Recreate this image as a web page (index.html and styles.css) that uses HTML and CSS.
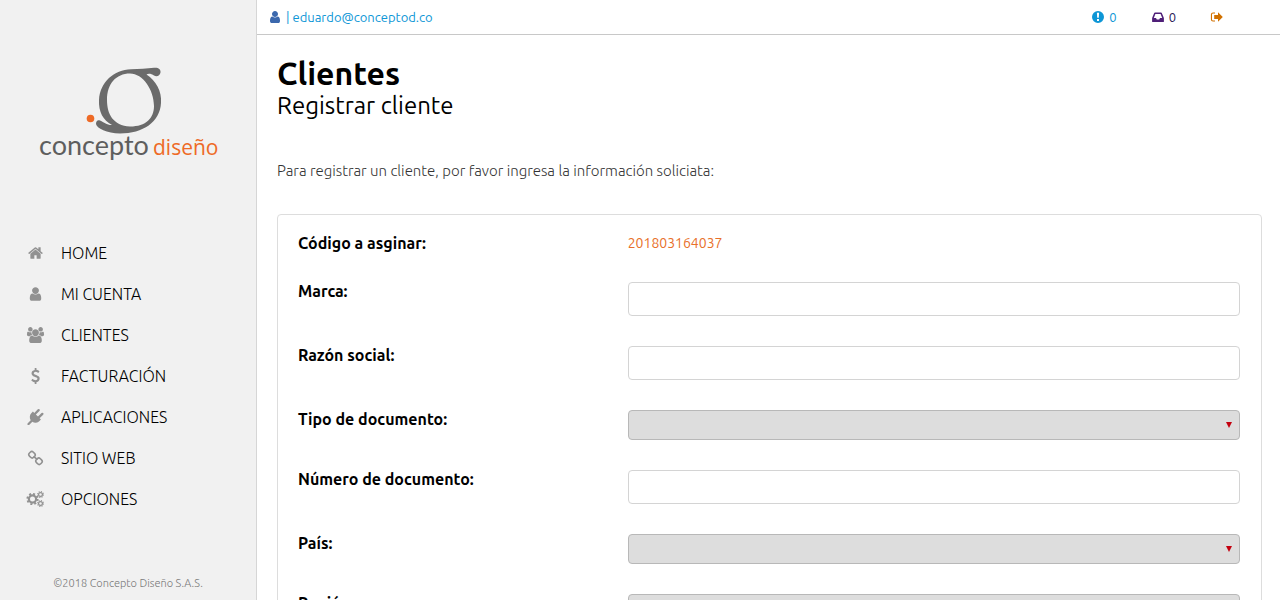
FILE: index.html
```
<!DOCTYPE html>
<html lang="es">
    <head>
        <meta charset="utf-8">
        <meta name="viewport" content="width=device-width, initial-scale=1">
        <title>Clientes - Registrar cliente</title>
        <link rel="stylesheet" href="styles.css">
    </head>
    <body>

        <aside class="sidebar">
            <a class="logo" href="#" aria-label="Concepto Diseño">
                <svg width="190" height="102" viewBox="5 0 190 102">
                    <path class="logo-mark" fill-rule="evenodd" d="M126 1.800C130 1.300 133 3 132.500 6.500C132 10 128.500 11 126 9.500C123.500 7.500 120 7 118.500 8.500C128 15 134 25 133 37C132 56 115 67.500 92 67.500C79 67.500 68.500 62 68 58C68 54.500 70 53.500 72 54.500C75 56 80 59.500 84 59C75 54 70.500 46 71 34C72 16 86 4 103 3.300C111 3 119 2.500 126 1.800ZM102 7.500C88 7.500 79 18 79 34C79 48 85 59.500 102 60.500C118 60.500 126 52 126 40C126 24 115 7.500 102 7.500Z"/>
                    <circle class="logo-dot" cx="62.500" cy="52.500" r="3.800"/>
                    <text class="logo-concepto" x="11" y="89">concepto</text>
                    <text class="logo-diseno" x="125" y="89">diseño</text>
                </svg>
            </a>

            <nav class="menu">
                <a href="#">
                    <svg viewBox="0 0 1792 1792"><path d="M1472 992v480q0 26-19 45t-45 19h-384v-384h-256v384h-384q-26 0-45-19t-19-45v-480q0-1 .5-3t.5-3l575-474 575 474q1 2 1 6zm223-69l-62 74q-8 9-21 11h-3q-13 0-21-7l-692-577-692 577q-12 8-24 7-13-2-21-11l-62-74q-8-10-7-23.500t11-21.500l719-599q32-26 76-26t76 26l244 204v-195q0-14 9-23t23-9h192q14 0 23 9t9 23v408l219 182q10 8 11 21.500t-7 23.500z"/></svg>
                    <span>HOME</span>
                </a>
                <a href="#">
                    <svg viewBox="0 0 1792 1792"><path d="M1536 1399q0 109-62.500 187t-150.500 78h-854q-88 0-150.500-78t-62.500-187q0-85 8.500-160.500t31.500-152 58.500-131 94-89 134.500-34.500q131 128 313 128t313-128q76 0 134.500 34.500t94 89 58.500 131 31.500 152 8.500 160.500zm-256-887q0 159-112.500 271.500t-271.500 112.500-271.500-112.500-112.500-271.500 112.500-271.500 271.500-112.500 271.500 112.500 112.500 271.500z"/></svg>
                    <span>MI CUENTA</span>
                </a>
                <a href="#">
                    <svg viewBox="0 0 1920 1792"><path d="M593 896q-162 5-265 128h-134q-82 0-138-40.500t-56-118.500q0-353 124-353 6 0 43.500 21t97.500 42.500 119 21.500q67 0 133-23-5 37-5 66 0 159 81 256zm1071 637q0 120-73 189.500t-194 69.500h-874q-121 0-194-69.500t-73-189.500q0-53 3.500-103.500t14-109 26.500-108.500 43-97.500 62-81 85.500-53.500 111.500-20q10 0 43 21.500t73 48 107 48 135 21.500 135-21.500 107-48 73-48 43-21.500q61 0 111.500 20t85.500 53.500 62 81 43 97.500 26.500 108.500 14 109 3.500 103.500zm-1024-1277q0 106-75 181t-181 75-181-75-75-181 75-181 181-75 181 75 75 181zm704 384q0 159-112.500 271.500t-271.500 112.500-271.500-112.500-112.500-271.500 112.500-271.500 271.500-112.500 271.500 112.500 112.500 271.500zm576 225q0 78-56 118.500t-138 40.500h-134q-103-123-265-128 93-97 93-256 0-29-5-66 66 23 133 23 59 0 119-21.500t97.500-42.500 31.500-21q124 0 124 353zm-128-609q0 106-75 181t-181 75-181-75-75-181 75-181 181-75 181 75 75 181z"/></svg>
                    <span>CLIENTES</span>
                </a>
                <a href="#">
                    <svg viewBox="0 0 1792 1792"><path d="M1362 1185q0 153-99.500 263.500t-258.500 136.500v175q0 14-9 23t-23 9h-135q-13 0-22.500-9.500t-9.500-22.500v-175q-66-9-127.500-31t-101.500-44.500-74-48-46.500-37.500-17.500-18q-17-21-2-41l103-135q7-10 23-12 15-2 24 9l2 2q113 99 243 125 37 8 74 8 81 0 142.500-43t61.500-122q0-28-15-53t-33.500-42-58.500-37.500-66-32-80-32.500q-39-16-61.500-25t-61.500-26.500-62.500-31-56.500-35.500-53.500-42.500-43.500-49-35.500-58-21-66.500-8.500-78q0-138 98-242t255-134v-180q0-13 9.500-22.500t22.500-9.500h135q14 0 23 9t9 23v176q57 6 110.500 23t87 33.500 63.500 37.500 39 29 15 14q17 18 5 38l-81 146q-8 15-23 16-14 3-27-7-3-3-14.500-12t-39-26.500-58.500-32-74.500-26-85.500-11.500q-95 0-155 43t-60 111q0 26 8.500 48t29.500 41.500 39.500 33 56 31 60.500 27 70 27.500q53 20 81 31.500t76 35 75.500 42.500 62 50 53 63.500 31.500 76.500 13 94z"/></svg>
                    <span>FACTURACIÓN</span>
                </a>
                <a href="#">
                    <svg viewBox="0 0 1792 1792"><path d="M1755 453q37 38 37 90.500t-37 90.500l-401 400 150 150-160 160q-163 163-389.500 186.500t-411.500-100.500l-362 362h-181v-181l362-362q-124-185-100.500-411.500t186.500-389.500l160-160 150 150 400-401q38-37 91-37t90 37 37 90.500-37 90.500l-400 401 234 234 401-400q38-37 91-37t90 37z"/></svg>
                    <span>APLICACIONES</span>
                </a>
                <a href="#">
                    <svg class="line" viewBox="0 0 16 16">
                        <rect x="1.500" y="2" width="6" height="5.500" rx="2.200" transform="rotate(45 4.500 4.750)"/>
                        <rect x="8.500" y="8.500" width="6" height="5.500" rx="2.200" transform="rotate(45 11.500 11.250)"/>
                        <path d="M6 6.300L10 9.700"/>
                    </svg>
                    <span>SITIO WEB</span>
                </a>
                <a href="#">
                    <svg class="line" viewBox="0 0 18 16">
                        <circle cx="6" cy="8" r="3.600" stroke-width="2.200"/>
                        <circle cx="6" cy="8" r="5.200" stroke-width="1.800" stroke-dasharray="2.040 2.040"/>
                        <circle cx="14" cy="3.500" r="1.900" stroke-width="1.200"/>
                        <circle cx="14" cy="3.500" r="2.900" stroke-width="1.100" stroke-dasharray="1.140 1.140"/>
                        <circle cx="14" cy="12.500" r="1.900" stroke-width="1.200"/>
                        <circle cx="14" cy="12.500" r="2.900" stroke-width="1.100" stroke-dasharray="1.140 1.140"/>
                    </svg>
                    <span>OPCIONES</span>
                </a>
            </nav>

            <p class="copyright">©2018 Concepto Diseño S.A.S.</p>
        </aside>

        <div class="page">
            <header class="topbar">
                <a class="account" href="#">
                    <svg class="user-icon" viewBox="0 0 1792 1792"><path d="M1536 1399q0 109-62.500 187t-150.500 78h-854q-88 0-150.500-78t-62.500-187q0-85 8.500-160.500t31.500-152 58.500-131 94-89 134.500-34.500q131 128 313 128t313-128q76 0 134.500 34.500t94 89 58.500 131 31.500 152 8.500 160.500zm-256-887q0 159-112.500 271.500t-271.500 112.500-271.500-112.500-112.500-271.500 112.500-271.500 271.500-112.500 271.500 112.500 112.500 271.500z"/></svg>
                    <span>| eduardo@conceptod.co</span>
                </a>
                <div class="actions">
                    <a class="alerts" href="#" aria-label="Alertas">
                        <svg viewBox="0 0 14 14"><path fill-rule="evenodd" d="M7 1a6 6 0 1 1 0 12a6 6 0 1 1 0-12zM5.900 2.800l.3 5h1.600l.3-5zM6 9v2h2v-2z"/></svg>
                        <span>0</span>
                    </a>
                    <a class="messages" href="#" aria-label="Mensajes">
                        <svg viewBox="0 0 14 14"><path fill-rule="evenodd" d="M4 2.500h6q.6 0 .8.600l1.900 4.400q.2.500.2 1v3q0 .6-.6.600h-10.600q-.6 0-.6-.6v-3q0-.5.200-1l1.900-4.400q.2-.6.800-.6zM4.400 4L2.800 7.900h2.200l.8 1.500h2.400l.8-1.500h2.200L9.600 4z"/></svg>
                        <span>0</span>
                    </a>
                    <a class="logout" href="#" aria-label="Salir">
                        <svg viewBox="0 0 14 14"><path d="M5 2.500v1.100h-2q-1 0-1 1v4.800q0 1 1 1h2v1.100h-2q-2.100 0-2.100-2.100v-4.800q0-2.100 2.100-2.100zM8 2.200L12.800 7L8 11.800v-2.800h-3.800v-4h3.800z"/></svg>
                    </a>
                </div>
            </header>

            <main class="content">
                <h1>Clientes</h1>
                <h2>Registrar cliente</h2>
                <p class="intro">Para registrar un cliente, por favor ingresa la información soliciata:</p>

                <form class="client-form">
                    <div class="row">
                        <label for="codigo">Código a asginar:</label>
                        <output class="code" id="codigo">201803164037</output>
                    </div>
                    <div class="row">
                        <label for="marca">Marca:</label>
                        <input type="text" id="marca" name="marca">
                    </div>
                    <div class="row">
                        <label for="razon">Razón social:</label>
                        <input type="text" id="razon" name="razon">
                    </div>
                    <div class="row">
                        <label for="tipo">Tipo de documento:</label>
                        <select id="tipo" name="tipo"><option></option></select>
                    </div>
                    <div class="row">
                        <label for="numero">Número de documento:</label>
                        <input type="text" id="numero" name="numero">
                    </div>
                    <div class="row">
                        <label for="pais">País:</label>
                        <select id="pais" name="pais"><option></option></select>
                    </div>
                    <div class="row">
                        <label for="region">Región:</label>
                        <select id="region" name="region"><option></option></select>
                    </div>
                </form>
            </main>
        </div>

    </body>
</html>
```
FILE: styles.css
```
* {
    box-sizing: border-box;
}

body {
    margin: 0;
    display: flex;
    height: 100vh;
    overflow: hidden;
    background-color: #fff;
    color: #000;
    font-family: Ubuntu, "Noto Sans", sans-serif;
    font-size: 14px;
}

a {
    text-decoration: none;
}

/* sidebar */
.sidebar {
    flex: 0 0 257px;
    display: flex;
    flex-direction: column;
    background-color: #f1f1f1;
    border-right: 1px solid #d6d6d6;
}

.logo {
    align-self: center;
    margin-top: 66px;
    height: 102px;
}

.logo svg {
    display: block;
}

.logo-mark {
    fill: #6b6b6b;
}

.logo-dot {
    fill: #ee6a26;
}

.logo-concepto {
    fill: #5e5e5e;
    font-family: Lato, sans-serif;
    font-size: 27px;
}

.logo-diseno {
    fill: #ee6a26;
    font-family: "Open Sans", sans-serif;
    font-size: 21px;
}

.menu {
    display: flex;
    flex-direction: column;
    margin-top: 64px;
}

.menu a {
    display: flex;
    align-items: center;
    gap: 16px;
    height: 41px;
    padding-left: 26px;
    color: #000;
    font-size: 16px;
    font-weight: 300;
}

.menu svg {
    width: 19px;
    height: 16px;
    fill: #919191;
}

.menu .line {
    fill: none;
    stroke: #919191;
    stroke-width: 1.600;
}

.copyright {
    margin: auto 0 8px;
    color: #777;
    font-size: 11px;
    font-weight: 300;
    line-height: 18px;
    text-align: center;
}

/* top bar */
.page {
    flex: 1;
    min-width: 0;
    display: flex;
    flex-direction: column;
}

.topbar {
    flex: none;
    display: flex;
    justify-content: space-between;
    align-items: center;
    height: 35px;
    padding: 0 56px 0 11px;
    border-bottom: 1px solid #c8c8c8;
    font-size: 13px;
}

.topbar a {
    display: flex;
    align-items: center;
    gap: 4px;
    color: #0d96d6;
}

.topbar svg {
    width: 14px;
    height: 14px;
    fill: currentColor;
}

.topbar .user-icon {
    fill: #3b68ad;
}

.actions {
    display: flex;
    gap: 34px;
}

.actions .messages {
    color: #4f1f78;
}

.messages span {
    color: #2a1a55;
}

.actions .logout {
    color: #d17100;
}

/* content */
.content {
    flex: 1;
    padding: 20px 18px 20px 20px;
    overflow-y: auto;
    scrollbar-width: none;
}

h1 {
    margin: 0;
    font-size: 32px;
    line-height: 36px;
}

h2 {
    margin: 0;
    font-size: 24px;
    font-weight: 400;
    line-height: 30px;
}

.intro {
    margin: 40px 0 33px;
    color: #333;
    font-size: 15px;
    font-weight: 300;
    line-height: 20px;
}

.client-form {
    display: flex;
    flex-direction: column;
    gap: 30px;
    padding: 19px 21px 30px 20px;
    border: 1px solid #ddd;
    border-radius: 4px;
}

.row {
    display: grid;
    grid-template-columns: 35% 1fr;
    align-items: start;
}

.row label {
    font-size: 16px;
    font-weight: 700;
    line-height: 18px;
}

.code {
    color: #e8702a;
    font-size: 14px;
    line-height: 18px;
}

.row input,
.row select {
    width: 100%;
    margin: 0;
    border-radius: 4px;
    font-family: inherit;
    font-size: 14px;
}

.row input {
    height: 34px;
    padding: 6px 12px;
    background-color: #fff;
    border: 1px solid #d4d4d4;
}

.row select {
    height: 30px;
    padding: 0 24px 0 8px;
    appearance: none;
    border: 1px solid #b8b8b8;
    background: #ddd url("data:image/svg+xml,%3Csvg xmlns='http://www.w3.org/2000/svg' width='6' height='6'%3E%3Cpath d='M0 0h6L3 6z' fill='%23c4000f'/%3E%3C/svg%3E") no-repeat right 7px center;
}
```
